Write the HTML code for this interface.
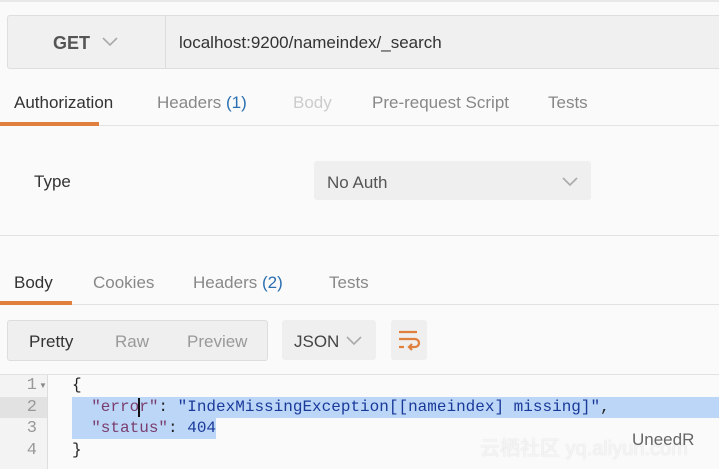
<!DOCTYPE html>
<html><head><style>
body{margin:0;width:719px;height:469px;overflow:hidden;background:#fafafa;font-family:"Liberation Sans",sans-serif;position:relative}
.a{position:absolute}
.tab{position:absolute;font-size:17px;color:#888}
</style></head><body>
<div class="a" style="left:0;top:0;width:719px;height:2px;background:#e8e8e8"></div>
<div class="a" style="left:7px;top:15px;width:720px;height:52px;background:#f0f0f0;border:1px solid #dedede;border-radius:3px"></div>
<div class="a" style="left:165px;top:16px;width:1px;height:52px;background:#dcdcdc"></div>
<div class="a" style="left:53px;top:33px;font-size:18px;font-weight:bold;color:#555">GET</div>
<svg class="a" style="left:101px;top:36px" width="18" height="12"><path d="M2 2 L9 9 L16 2" stroke="#aaa" stroke-width="1.6" fill="none"/></svg>
<div class="a" style="left:179px;top:33px;font-size:17px;color:#333">localhost:9200/nameindex/_search</div>

<div class="tab" style="left:14px;top:93px;color:#333">Authorization</div>
<div class="tab" style="left:157px;top:93px">Headers <span style="color:#2a6fb0">(1)</span></div>
<div class="tab" style="left:293px;top:93px;color:#ccc">Body</div>
<div class="tab" style="left:372px;top:93px">Pre-request Script</div>
<div class="tab" style="left:548px;top:93px">Tests</div>
<div class="a" style="left:0;top:125px;width:719px;height:1px;background:#e2e2e2"></div>
<div class="a" style="left:0;top:122px;width:99px;height:4px;background:#e0803f"></div>

<div class="a" style="left:34px;top:172px;font-size:17px;color:#333">Type</div>
<div class="a" style="left:314px;top:161px;width:277px;height:39px;background:#efefef;border-radius:3px"></div>
<div class="a" style="left:327px;top:173px;font-size:17px;color:#555">No Auth</div>
<svg class="a" style="left:561px;top:176px" width="18" height="12"><path d="M2 2 L9 9 L16 2" stroke="#aaa" stroke-width="1.6" fill="none"/></svg>
<div class="a" style="left:0;top:235px;width:719px;height:1px;background:#e2e2e2"></div>

<div class="tab" style="left:14px;top:273px;color:#333">Body</div>
<div class="tab" style="left:93px;top:273px">Cookies</div>
<div class="tab" style="left:193px;top:273px">Headers <span style="color:#2a6fb0">(2)</span></div>
<div class="tab" style="left:329px;top:273px">Tests</div>
<div class="a" style="left:0;top:304px;width:719px;height:1px;background:#e2e2e2"></div>
<div class="a" style="left:0;top:301px;width:72px;height:4px;background:#e0803f"></div>

<div class="a" style="left:7px;top:320px;width:259px;height:39px;background:#efefef;border:1px solid #ddd;border-radius:3px"></div>
<div class="tab" style="left:29px;top:332px;color:#333">Pretty</div>
<div class="tab" style="left:115px;top:332px;color:#999">Raw</div>
<div class="tab" style="left:187px;top:332px;color:#999">Preview</div>
<div class="a" style="left:282px;top:320px;width:94px;height:40px;background:#efefef;border-radius:3px"></div>
<div class="tab" style="left:294px;top:332px;color:#444">JSON</div>
<svg class="a" style="left:345px;top:335px" width="18" height="12"><path d="M2 2 L9 9 L16 2" stroke="#aaa" stroke-width="1.6" fill="none"/></svg>
<div class="a" style="left:391px;top:320px;width:36px;height:40px;background:#efefef;border-radius:3px"></div>
<svg class="a" style="left:396px;top:327px" width="26" height="26"><g stroke="#e0803f" stroke-width="2.2" fill="none"><path d="M3 5 H21"/><path d="M3 12 H19 a4 4 0 0 1 0 8 H13"/><path d="M16 17 L13 20 L16 23"/><path d="M3 20 H8"/></g></svg>

<div class="a" style="left:0;top:374px;width:719px;height:1px;background:#e2e2e2"></div>
<div class="a" style="left:0;top:375px;width:47px;height:94px;background:#f3f3f3;border-right:1px solid #ddd"></div>
<div class="a" style="left:0;top:397px;width:47px;height:21px;background:#e2e2e2"></div>
<div class="a" style="left:72px;top:397px;width:647px;height:21px;background:#bcd6f7"></div>
<div class="a" style="left:72px;top:418px;width:144px;height:21px;background:#bcd6f7"></div>
<div class="a" style="left:0;top:375px;font-family:'Liberation Mono',monospace;font-size:17px;line-height:21.5px;color:#999;width:37px;text-align:right">1<br>2<br>3<br>4</div>
<div class="a" style="left:39px;top:381px;font-size:8px;color:#888">▼</div>
<pre class="a" style="margin:0;left:72px;top:375px;font-family:'Liberation Mono',monospace;font-size:16px;line-height:21.5px;color:#222">{
  <span style="color:#7a3e6e">"error"</span>: <span style="color:#1a3a9a">"IndexMissingException[[nameindex] missing]"</span>,
  <span style="color:#7a3e6e">"status"</span>: <span style="color:#1a3a9a">404</span>
}</pre>
<div class="a" style="left:138px;top:398px;width:2px;height:19px;background:#111"></div>
<div class="a" style="left:480px;top:432px;font-size:20px;color:rgba(255,255,255,0.75);text-shadow:0 0 1px #ccc;font-family:'Liberation Sans','Noto Sans CJK SC',sans-serif">云栖社区 yq.aliyun.com</div>
<div class="a" style="left:632px;top:430px;font-size:17px;color:#666">UneedR</div>
</body></html>
